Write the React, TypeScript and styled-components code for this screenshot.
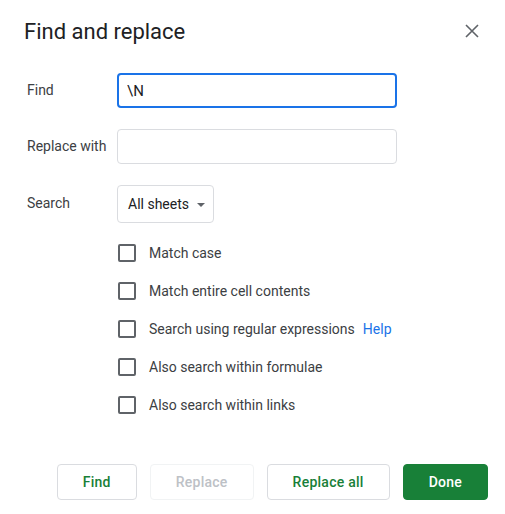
import styled, { createGlobalStyle } from "styled-components";

const GlobalStyle = createGlobalStyle`
  body {
    margin: 0;
    background: #ffffff;
    font-family: Roboto, "Liberation Sans", sans-serif;
  }
`;

const Dialog = styled.div`
  width: 505px;
  height: 514px;
  box-sizing: border-box;
  padding: 18px 17px 0 24px;
  background: #ffffff;
  display: flex;
  flex-direction: column;
`;

const Header = styled.div`
  display: flex;
  justify-content: space-between;
  align-items: center;
  height: 28px;
  padding-right: 4px;
`;

const Title = styled.h2`
  margin: 0;
  font-size: 22px;
  line-height: 28px;
  font-weight: 400;
  color: #202124;
`;

const CloseButton = styled.button`
  width: 24px;
  height: 24px;
  padding: 0;
  border: none;
  background: transparent;
  display: flex;
  align-items: center;
  justify-content: center;
  cursor: pointer;
  margin-top: -2px;
`;

const Form = styled.div`
  margin-top: 27px;
  display: grid;
  grid-template-columns: 93px 280px;
  row-gap: 21px;
  align-items: center;
`;

const Label = styled.label`
  padding-left: 3px;
  font-size: 14px;
  line-height: 16px;
  margin-top: -2px;
  color: #3c4043;
`;

const TextInput = styled.input<{ $focused?: boolean }>`
  box-sizing: border-box;
  width: 280px;
  height: 35px;
  border: ${({ $focused }) => ($focused ? "2px solid #1a73e8" : "1px solid #dadce0")};
  padding: 0 8px 0 ${({ $focused }) => ($focused ? "8px" : "9px")};
  border-radius: 4px;
  font-family: Roboto, "Liberation Sans", sans-serif;
  font-size: 15px;
  color: #202124;
  outline: none;
`;

const Select = styled.button`
  justify-self: start;
  box-sizing: border-box;
  height: 38px;
  padding: 0 8px 0 10px;
  border: 1px solid #dadce0;
  border-radius: 4px;
  background: #ffffff;
  display: flex;
  align-items: center;
  gap: 8px;
  font-family: Roboto, "Liberation Sans", sans-serif;
  font-size: 14px;
  color: #202124;
`;

const Caret = styled.span`
  width: 0;
  height: 0;
  border-left: 4px solid transparent;
  border-right: 4px solid transparent;
  border-top: 4px solid #5f6368;
  margin-top: 1px;
`;

const Options = styled.div`
  margin-top: 11px;
  padding-left: 94px;
  display: flex;
  flex-direction: column;
`;

const OptionRow = styled.div`
  height: 38px;
  display: flex;
  align-items: center;
  gap: 13px;
  font-size: 14px;
  color: #3c4043;
`;

const Box = styled.span`
  box-sizing: border-box;
  width: 18px;
  height: 18px;
  border: 2px solid #5f6368;
  border-radius: 2px;
  flex-shrink: 0;
`;

const Help = styled.a`
  color: #1a73e8;
  margin-left: 8px;
  text-decoration: none;
`;

const Footer = styled.div`
  margin-top: 40px;
  display: flex;
  justify-content: flex-end;
  gap: 13px;
`;

const Button = styled.button<{ $variant?: "primary" | "disabled" }>`
  box-sizing: border-box;
  height: 36px;
  padding: 0 25px;
  border-radius: 4px;
  font-family: Roboto, "Liberation Sans", sans-serif;
  font-size: 14px;
  font-weight: 500;
  letter-spacing: 0.25px;
  border: 1px solid
    ${({ $variant }) =>
      $variant === "primary" ? "#188038" : $variant === "disabled" ? "#f1f3f4" : "#dadce0"};
  background: ${({ $variant }) => ($variant === "primary" ? "#188038" : "#ffffff")};
  color: ${({ $variant }) =>
    $variant === "primary" ? "#ffffff" : $variant === "disabled" ? "#bdc1c6" : "#188038"};
`;

const options = [
  "Match case",
  "Match entire cell contents",
  "Search using regular expressions",
  "Also search within formulae",
  "Also search within links",
];

export default function App() {
  return (
    <Dialog>
      <GlobalStyle />
      <Header>
        <Title>Find and replace</Title>
        <CloseButton aria-label="Close">
          <svg width="24" height="24" viewBox="0 0 24 24">
            <path d="M6 6 L18 18 M18 6 L6 18" stroke="#5f6368" strokeWidth="1.6" />
          </svg>
        </CloseButton>
      </Header>

      <Form>
        <Label>Find</Label>
        <TextInput $focused defaultValue="\N" />
        <Label>Replace with</Label>
        <TextInput />
        <Label>Search</Label>
        <Select>
          All sheets
          <Caret />
        </Select>
      </Form>

      <Options>
        {options.map((text, i) => (
          <OptionRow key={text}>
            <Box />
            <span>
              {text}
              {i === 2 && <Help href="#">Help</Help>}
            </span>
          </OptionRow>
        ))}
      </Options>

      <Footer>
        <Button>Find</Button>
        <Button $variant="disabled">Replace</Button>
        <Button>Replace all</Button>
        <Button $variant="primary">Done</Button>
      </Footer>
    </Dialog>
  );
}
